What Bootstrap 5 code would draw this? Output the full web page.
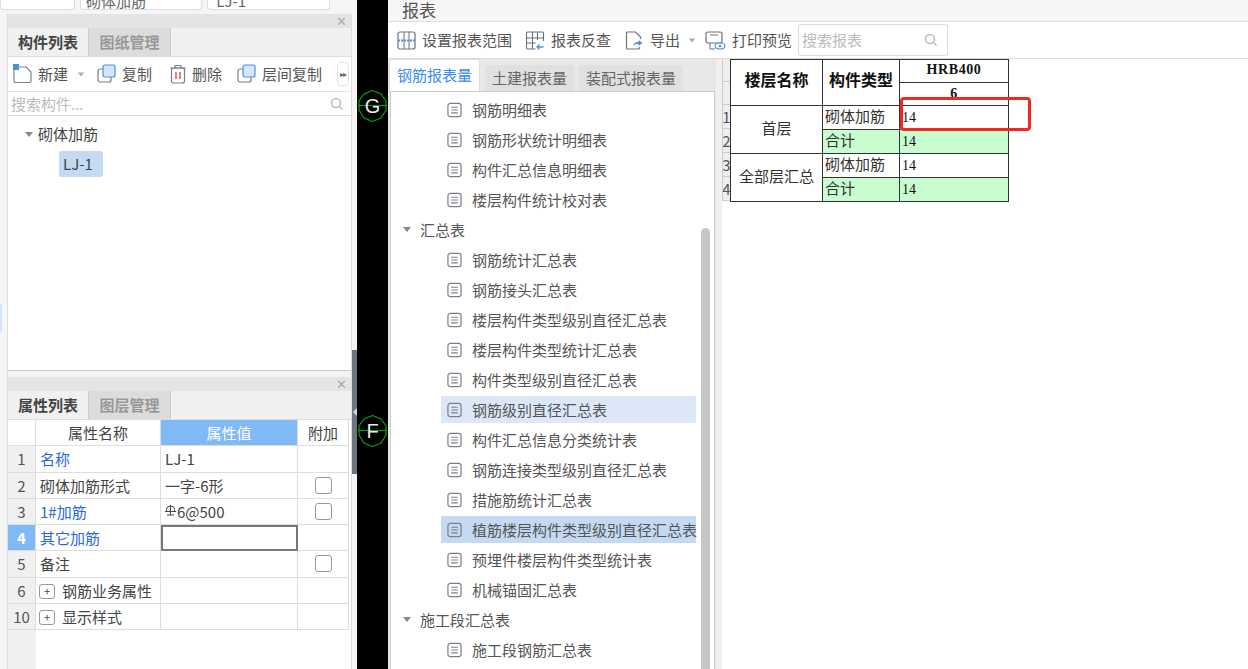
<!DOCTYPE html>
<html lang="zh">
<head>
<meta charset="UTF-8">
<title>报表</title>
<link href="https://cdn.jsdelivr.net/npm/bootstrap@5.3.0/dist/css/bootstrap.min.css" rel="stylesheet">
<style>
html, body { height: 669px; overflow: hidden; }
body { width: 1248px; background: #fff; color: #444; font-family: "Noto Sans CJK SC", "Liberation Sans", sans-serif; font-size: 15px; line-height: 1.2; }
.app-root { width: 1248px; height: 669px; }
.side-col { width: 357px; background: linear-gradient(#d4e4f8, #d4e4f8) 0 304px / 2px 28px no-repeat, #f5f5f5; flex: none; }
.top-strip { height: 14px; overflow: hidden; gap: 5px; }
.top-field { height: 10px; background: #fff; border: 1px solid #ddd; border-top: 0; border-radius: 0 0 4px 4px; padding-left: 5px; line-height: 2px; color: #666; overflow: hidden; }
.side-panel { margin-left: 7px; width: 345px; border-left: 1px solid #ddd; border-right: 1px solid #ddd; }
.panel-head { height: 14px; background: #e4e4e4; color: #aaa; font-size: 13px; padding-right: 4px; line-height: 14px; }
.tab-strip { height: 29px; background: #f0f0f0; border-bottom: 1px solid #ddd; }
.tab-on, .tab-off { font-weight: 700; line-height: 28px; text-align: center; }
.tab-on { width: 81px; background: #f0f0f0; color: #444; border-right: 1px solid #ccc; }
.tab-off { width: 82px; background: #dcdcdc; color: #999; border-right: 1px solid #ccc; }
.tool-strip { height: 35px; background: #fff; border-bottom: 1px solid #e2e2e2; padding-left: 5px; gap: 15px; white-space: nowrap; overflow: hidden; }
.tool-item { gap: 5px; color: #555; }
.tool-new { margin-right: -3px; }
.tool-del { margin-left: 2px; }
.more-btn { width: 13px; height: 24px; border: 1px solid #e2e2e2; border-radius: 4px; font-size: 8px; color: #666; line-height: 22px; text-align: center; margin-left: auto; margin-right: 2px; letter-spacing: -1px; }
.search-strip { height: 24px; background: #fff; border-bottom: 1px solid #ddd; padding: 0 7px 0 3px; color: #bbb; }
.tree-box { height: 255px; background: #fff; border-bottom: 1px solid #ccc; padding: 9px 0 0 17px; }
.tree-sel { margin: 8px 0 0 34px; width: 44px; height: 26px; line-height: 26px; background: #c4daf2; border-radius: 3px; padding-left: 4px; color: #444; }
.arrow-down { width: 0; height: 0; border-left: 4px solid transparent; border-right: 4px solid transparent; border-top: 5px solid #888; flex: none; }
.arrow-soft { border-top-color: #aaa; transform: scale(.8); }
.gap-band { height: 6px; background: #f3f3f3; }
.prop-grid { display: grid; grid-template-columns: 28px 125px 137px 51px; background: #fff; }
.prop-cell { height: 26.25px; line-height: 25px; background: #fff; border-right: 1px solid #ddd; border-bottom: 1px solid #ddd; padding-left: 4px; white-space: nowrap; overflow: hidden; }
.prop-num { background: #f0f0f0; text-align: center; padding: 0; color: #555; }
.prop-blank { background: #fff; }
.prop-head { text-align: center; padding: 0; }
.prop-active { background: #7fb9f6; color: #fff; }
.prop-link { color: #2a66e0; }
.prop-focus { border: 2px solid #777; line-height: 22px; }
.prop-check { display: flex; align-items: center; justify-content: center; padding: 0; }
.check-box { width: 17px; height: 17px; border: 1px solid #999; border-radius: 3px; background: #fff; }
.plus-box { display: inline-block; width: 16px; height: 15px; border: 1px solid #999; border-radius: 3px; font-size: 11px; line-height: 12px; text-align: center; margin: 0 7px 0 -1px; vertical-align: 1px; }
.prop-fill { height: 40px; display: grid; grid-template-columns: 28px 1fr; }
.prop-fill-num { background: #f0f0f0; }
.prop-fill-rest { background: #fff; }
.black-col { width: 31px; background: #000; flex: none; }
.axis-mark { position: absolute; left: 1px; width: 29px; height: 32px; }
.axis-g { top: 90px; }
.axis-f { top: 415px; }
.axis-label { font-family: "Liberation Sans", sans-serif; font-size: 20px; fill: #e8e8e8; text-anchor: middle; }
.divider-tab { position: absolute; left: -5px; top: 350px; width: 5px; height: 124px; background: #6d7680; }
.divider-notch { position: absolute; left: -4px; top: 408px; width: 0; height: 0; border-top: 4px solid transparent; border-bottom: 4px solid transparent; border-right: 4px solid #d5d8dc; }
.report-win { width: 860px; background: #fff; flex: none; }
.win-title { height: 22px; padding-left: 14px; font-size: 17px; line-height: 20px; color: #555; background: #f6f6f6; border-bottom: 1px solid #ddd; }
.win-tools { height: 37px; background: #fff; border-bottom: 1px solid #ddd; padding-left: 9px; white-space: nowrap; }
.win-tool { gap: 6px; color: #555; margin-right: 13px; }
.tool-arrow { margin-left: 2px; margin-right: -4px; }
.win-search { width: 150px; height: 32px; border: 1px solid #ddd; border-radius: 3px; color: #bbb; padding: 0 9px 0 3px; margin-left: -7px; }
.left-pane { width: 328px; background: #e8e8e8; flex: none; }
.pane-tabs { height: 32px; padding-left: 1px; gap: 5px; }
.pane-tab { height: 26px; line-height: 26px; padding: 0 7px; background: #e0e0e0; color: #666; border-radius: 3px 3px 0 0; }
.pane-tab-on { height: 32px; line-height: 30px; padding: 0 7px; background: #fff; color: #3b8cf0; border-radius: 3px 3px 0 0; border: 1px solid #ddd; border-bottom: 0; }
.list-wrap { height: 578px; margin-left: 2px; width: 325px; background: #fff; border: 1px solid #ccc; border-bottom: 0; position: relative; overflow: hidden; }
.report-row { height: 27px; margin: 0 0 3px 50px; width: 255px; padding-left: 6px; gap: 10px; color: #555; white-space: nowrap; }
.report-row.row-soft { background: #dce8f8; }
.report-row.row-strong { background: #c4daf2; }
.group-row { height: 27px; margin-bottom: 3px; padding-left: 12px; gap: 9px; color: #555; }
.list-first { height: 4px; }
.scroll-bar { position: absolute; right: 4px; top: 136px; bottom: 0; width: 9px; background: #c6c6c6; border-radius: 5px 5px 0 0; }
.sheet-pane { min-width: 0; }
.pane-gutter { width: 6px; background: #f0f0f0; flex: none; }
.row-heads { width: 8px; align-self: flex-start; background: #eee; border-left: 1px solid #ccc; color: #556; text-align: center; font-size: 15px; line-height: 24px; flex: none; overflow: hidden; }
.row-head-top { height: 23px; border-bottom: 1px solid #ccc; }
.row-head-num { height: 24px; border-bottom: 1px solid #ccc; margin: 0 -4px; }
.sheet-table { border-collapse: collapse; color: #111; table-layout: fixed; }
.sheet-table td, .sheet-table th { border: 1px solid #333; padding: 0 2px; height: 24px; line-height: 20px; }
.sheet-table th { text-align: center; font-weight: 700; font-size: 16px; padding-bottom: 8px; }
.sheet-table .num-h { font-family: "Liberation Serif", serif; font-size: 14px; height: 23px; letter-spacing: .6px; padding-bottom: 2px; }
.sheet-table .num-low { padding-bottom: 0; }
.sheet-table .num-c { font-family: "Liberation Serif", serif; font-size: 14px; }
.sheet-table .txt-c { font-size: 15px; color: #333; padding-bottom: 3px; }
.sheet-table .mid-c { text-align: center; font-size: 15px; color: #333; padding-bottom: 4px; }
.sum-row td { background: #c8fdd0; }
.mark-box { position: absolute; left: 184px; top: 38px; width: 131px; height: 34px; border: 3px solid #f02a22; border-radius: 4px; }
svg { flex: none; display: block; }
.rebar-mark { display: inline-block; vertical-align: 2px; margin-right: 1px; }
</style>
</head>
<body>
<svg width="0" height="0" class="position-absolute">
  <symbol id="i-doc" viewBox="0 0 16 16"><rect x="1" y="1" width="14" height="14" rx="2.5" fill="none" stroke="#7a7f8a" stroke-width="1.3"/><path d="M4.5 5h7M4.5 8h7M4.5 11h7" stroke="#7a7f8a" stroke-width="1.2"/></symbol>
  <symbol id="i-search" viewBox="0 0 14 14"><circle cx="6" cy="6" r="4.5" fill="none" stroke="#bbb" stroke-width="1.5"/><path d="M9.5 9.5l3 3" stroke="#bbb" stroke-width="1.5"/></symbol>
  <symbol id="i-copy" viewBox="0 0 20 20"><rect x="1" y="5" width="13" height="13" rx="2" fill="#fff" stroke="#7a7f8a" stroke-width="1.2"/><rect x="6" y="1" width="12" height="12" rx="2" fill="#d6e6fa" stroke="#4a90e2" stroke-width="1.2"/></symbol>
  <symbol id="i-axis" viewBox="0 0 29 32"><path d="M14.500.5L23 4l5 7v9l-5 8-8.500 3.500L6 28l-5-8v-9l5-7z" fill="none" stroke="#0c9a0c" stroke-width="1.200"/><path d="M0 15.500h29" stroke="#0c9a0c" stroke-width="1.200"/></symbol>
</svg>
<div class="app-root d-flex">
  <div class="side-col">
    <div class="top-strip d-flex">
      <div class="top-field" style="width:75px"></div>
      <div class="top-field" style="width:122px">砌体加筋</div>
      <div class="top-field" style="width:123px">&nbsp;LJ-1</div>
    </div>
    <div class="side-panel">
      <div class="panel-head text-end">✕</div>
      <div class="tab-strip d-flex"><div class="tab-on">构件列表</div><div class="tab-off">图纸管理</div></div>
      <div class="tool-strip d-flex align-items-center">
        <div class="tool-item tool-new d-flex align-items-center">
          <svg width="20" height="20" viewBox="0 0 20 20"><path d="M2 3h11l5 5v9a1.500 1.500 0 0 1-1.500 1.500h-14A1.500 1.500 0 0 1 1 17V5" fill="none" stroke="#7a7f8a" stroke-width="1.2"/><rect x="0" y="0" width="6" height="6" fill="#4a90e2"/></svg>新建<span class="arrow-down arrow-soft ms-1"></span>
        </div>
        <div class="tool-item d-flex align-items-center"><svg width="20" height="20"><use href="#i-copy"/></svg>复制</div>
        <div class="tool-item tool-del d-flex align-items-center">
          <svg width="18" height="20" viewBox="0 0 18 20"><path d="M1 4h16M6 4V1.500h6V4" fill="none" stroke="#7a7f8a" stroke-width="1.2"/><rect x="2.500" y="4" width="13" height="15" rx="2" fill="none" stroke="#7a7f8a" stroke-width="1.2"/><path d="M7 8v7M11 8v7" stroke="#e0473f" stroke-width="1.400"/></svg>删除
        </div>
        <div class="tool-item d-flex align-items-center"><svg width="20" height="20"><use href="#i-copy"/></svg>层间复制</div>
        <div class="more-btn">▸▸</div>
      </div>
      <div class="search-strip d-flex align-items-center justify-content-between"><span>搜索构件...</span><svg width="14" height="14"><use href="#i-search"/></svg></div>
      <div class="tree-box">
        <div class="d-flex align-items-center gap-1"><span class="arrow-down" style="margin-right:1px"></span>砌体加筋</div>
        <div class="tree-sel">LJ-1</div>
      </div>
      <div class="gap-band"></div>
      <div class="panel-head text-end">✕</div>
      <div class="tab-strip d-flex"><div class="tab-on">属性列表</div><div class="tab-off">图层管理</div></div>
      <div class="prop-grid">
        <div class="prop-cell prop-num prop-blank"></div><div class="prop-cell prop-head">属性名称</div><div class="prop-cell prop-head prop-active">属性值</div><div class="prop-cell prop-head">附加</div>
        <div class="prop-cell prop-num">1</div><div class="prop-cell prop-link">名称</div><div class="prop-cell">LJ-1</div><div class="prop-cell"></div>
        <div class="prop-cell prop-num">2</div><div class="prop-cell">砌体加筋形式</div><div class="prop-cell">一字-6形</div><div class="prop-cell prop-check"><span class="check-box"></span></div>
        <div class="prop-cell prop-num">3</div><div class="prop-cell prop-link">1#加筋</div>
        <div class="prop-cell"><svg class="rebar-mark" width="11" height="11" viewBox="0 0 11 11"><path d="M1.500 6V4.500a4 3.500 0 0 1 8 0V6M0 6.500h11M5.500 0v10M2 10h7" fill="none" stroke="#444"/></svg>6@500</div>
        <div class="prop-cell prop-check"><span class="check-box"></span></div>
        <div class="prop-cell prop-num prop-active fw-bold">4</div><div class="prop-cell prop-link">其它加筋</div><div class="prop-cell prop-focus"></div><div class="prop-cell"></div>
        <div class="prop-cell prop-num">5</div><div class="prop-cell">备注</div><div class="prop-cell"></div><div class="prop-cell prop-check"><span class="check-box"></span></div>
        <div class="prop-cell prop-num">6</div><div class="prop-cell"><span class="plus-box">+</span>钢筋业务属性</div><div class="prop-cell"></div><div class="prop-cell"></div>
        <div class="prop-cell prop-num">10</div><div class="prop-cell"><span class="plus-box">+</span>显示样式</div><div class="prop-cell"></div><div class="prop-cell"></div>
      </div>
      <div class="prop-fill"><div class="prop-fill-num"></div><div class="prop-fill-rest"></div></div>
    </div>
  </div>
  <div class="black-col position-relative">
    <div class="divider-tab"></div>
    <div class="divider-notch"></div>
    <svg class="axis-mark axis-g" viewBox="0 0 29 32"><use href="#i-axis"/><text class="axis-label" x="14.500" y="23">G</text></svg>
    <svg class="axis-mark axis-f" viewBox="0 0 29 32"><use href="#i-axis"/><text class="axis-label" x="14.500" y="23">F</text></svg>
  </div>
  <div class="report-win">
    <div class="win-title">报表</div>
    <div class="win-tools d-flex align-items-center">
      <div class="win-tool d-flex align-items-center"><svg width="19" height="19" viewBox="0 0 19 19"><rect x="1" y="1" width="17" height="17" rx="2" fill="none" stroke="#6a707c" stroke-width="1.2"/><path d="M7 1v17M12 1v17" stroke="#6a707c"/><path d="M1 9.500h17" stroke="#4a90e2" stroke-width="2" stroke-dasharray="2 1"/></svg>设置报表范围</div>
      <div class="win-tool d-flex align-items-center"><svg width="20" height="19" viewBox="0 0 19 19"><path d="M10 18H2a1 1 0 0 1-1-1V2a1 1 0 0 1 1-1h15a1 1 0 0 1 1 1v8M7 1v17M12 1v8M1 7h17M1 12h9" fill="none" stroke="#6a707c" stroke-width="1.1"/><path d="M18 16h-6m2-2.500L11.500 16l2.500 2.500" fill="none" stroke="#4a90e2" stroke-width="1.300"/></svg>报表反查</div>
      <div class="win-tool d-flex align-items-center"><svg width="20" height="19" viewBox="0 0 19 19"><path d="M15 16v1a1 1 0 0 1-1 1H3a1 1 0 0 1-1-1V2a1 1 0 0 1 1-1h8l5 5v2" fill="none" stroke="#6a707c" stroke-width="1.2"/><path d="M9 15c0-3 2-4 5-4V9l4 3-4 3v-2c-2 0-4 0-5 2z" fill="#4a90e2"/></svg>导出<span class="arrow-down arrow-soft tool-arrow"></span></div>
      <div class="win-tool d-flex align-items-center"><svg width="21" height="19" viewBox="0 0 21 19"><rect x="1" y="1" width="16" height="11" rx="2" fill="none" stroke="#6a707c" stroke-width="1.2"/><path d="M5 4h8M5 12v6h5" fill="none" stroke="#6a707c"/><ellipse cx="15" cy="15" rx="5" ry="3" fill="#fff" stroke="#4a90e2" stroke-width="1.200"/><circle cx="15" cy="15" r="1.300" fill="#4a90e2"/></svg>打印预览</div>
      <div class="win-search d-flex align-items-center justify-content-between"><span>搜索报表</span><svg width="14" height="14"><use href="#i-search"/></svg></div>
    </div>
    <div class="d-flex">
      <div class="left-pane">
        <div class="pane-tabs d-flex align-items-end">
          <div class="pane-tab-on">钢筋报表量</div><div class="pane-tab">土建报表量</div><div class="pane-tab">装配式报表量</div>
        </div>
        <div class="list-wrap" id="reportList">
          <div class="scroll-bar"></div>
        </div>
      </div>
      <div class="sheet-pane d-flex flex-grow-1 position-relative">
        <div class="pane-gutter"></div>
        <div class="row-heads">
          <div class="row-head-top"></div><div class="row-head-top"></div>
          <div class="row-head-num">1</div><div class="row-head-num">2</div><div class="row-head-num">3</div><div class="row-head-num">4</div>
        </div>
        <div>
          <table class="sheet-table">
            <colgroup><col style="width:92px"><col style="width:77px"><col style="width:109px"></colgroup>
            <tr><th rowspan="2">楼层名称</th><th rowspan="2">构件类型</th><th class="num-h">HRB400</th></tr>
            <tr><th class="num-h num-low">6</th></tr>
            <tr><td rowspan="2" class="mid-c">首层</td><td class="txt-c">砌体加筋</td><td class="num-c">14</td></tr>
            <tr class="sum-row"><td class="txt-c">合计</td><td class="num-c">14</td></tr>
            <tr><td rowspan="2" class="mid-c">全部层汇总</td><td class="txt-c">砌体加筋</td><td class="num-c">14</td></tr>
            <tr class="sum-row"><td class="txt-c">合计</td><td class="num-c">14</td></tr>
          </table>
        </div>
        <div class="mark-box"></div>
      </div>
    </div>
  </div>
</div>
<script>
  // 报表列表
  const rows = [
    ["r", "钢筋明细表"], ["r", "钢筋形状统计明细表"], ["r", "构件汇总信息明细表"], ["r", "楼层构件统计校对表"],
    ["g", "汇总表"],
    ["r", "钢筋统计汇总表"], ["r", "钢筋接头汇总表"], ["r", "楼层构件类型级别直径汇总表"], ["r", "楼层构件类型统计汇总表"],
    ["r", "构件类型级别直径汇总表"], ["r", "钢筋级别直径汇总表", "row-soft"], ["r", "构件汇总信息分类统计表"],
    ["r", "钢筋连接类型级别直径汇总表"], ["r", "措施筋统计汇总表"], ["r", "植筋楼层构件类型级别直径汇总表", "row-strong"],
    ["r", "预埋件楼层构件类型统计表"], ["r", "机械锚固汇总表"],
    ["g", "施工段汇总表"],
    ["r", "施工段钢筋汇总表"]
  ];
  let html = '<div class="list-first"></div>';
  rows.forEach(r => {
    if (r[0] === "g") {
      html += `<div class="group-row d-flex align-items-center"><span class="arrow-down"></span>${r[1]}</div>`;
    } else {
      html += `<div class="report-row d-flex align-items-center ${r[2] || ""}"><svg width="15" height="16"><use href="#i-doc"/></svg>${r[1]}</div>`;
    }
  });
  document.getElementById("reportList").insertAdjacentHTML("beforeend", html);
</script>
<script src="https://cdn.jsdelivr.net/npm/bootstrap@5.3.0/dist/js/bootstrap.bundle.min.js"></script>
</body>
</html>
